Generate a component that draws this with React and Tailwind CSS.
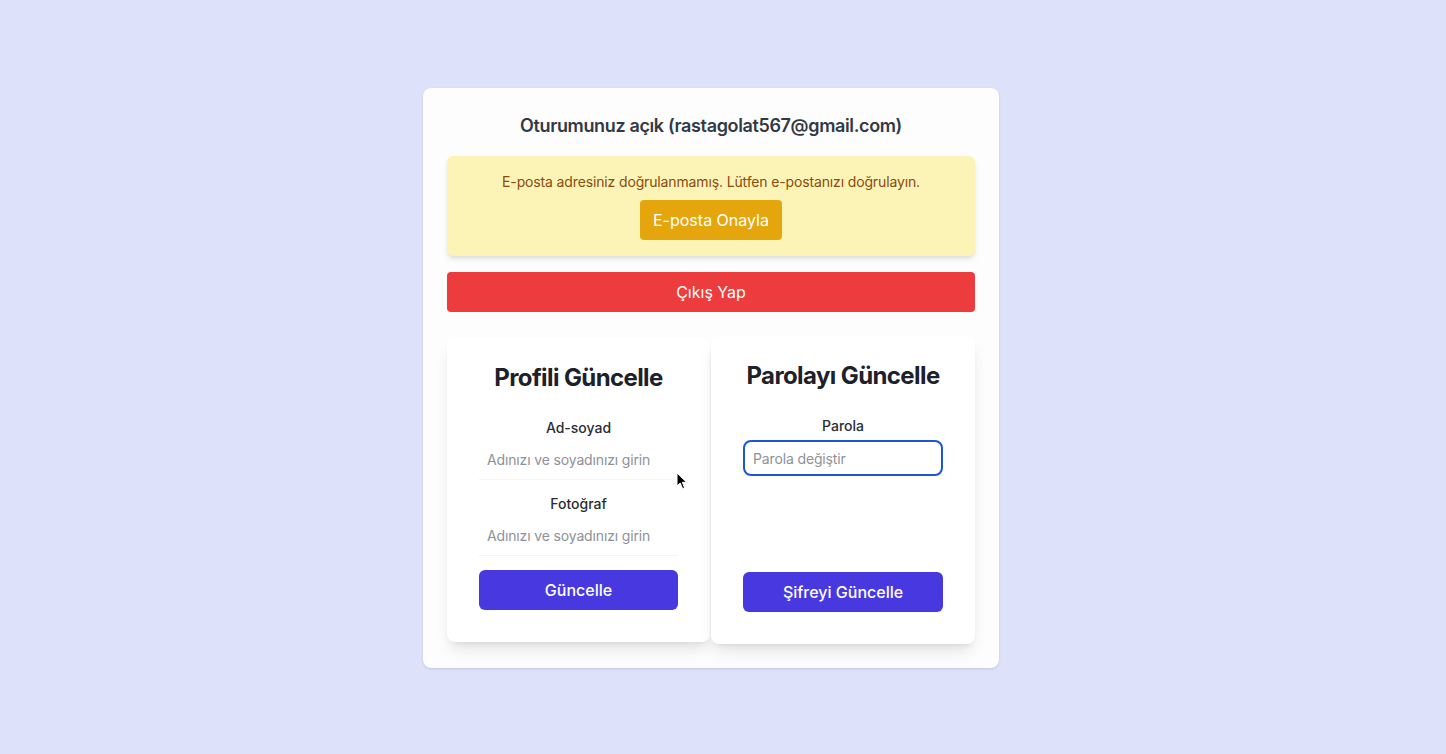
import React from 'react';

const font = { fontFamily: 'Inter, "Noto Sans", sans-serif' };

const Cursor = () => (
  <svg className="absolute left-[676px] top-[472px]" width="12" height="18" viewBox="0 0 12 18">
    <path d="M1 1 L1 14 L4.2 11 L6.6 16.6 L8.6 15.8 L6.3 10.3 L10.6 10.3 Z" fill="#000" stroke="#fff" strokeWidth="1" />
  </svg>
);

const App = () => {
  return (
    <div className="relative min-h-screen w-full bg-[#dde1fa] flex items-center justify-center pr-6 pt-0.5" style={font}>
      <div className="w-[576px] bg-[#fdfdfe] rounded-lg p-6 shadow-sm">
        {/* Session header */}
        <h2 className="text-lg leading-7 font-semibold tracking-[-0.02em] text-[#333944] text-center mb-4 whitespace-nowrap">
          Oturumunuz açık (rastagolat567@gmail.com)
        </h2>

        {/* Verify notice */}
        <div className="bg-[#fcf4b6] rounded-md shadow-md p-4 flex flex-col items-center">
          <p className="text-sm leading-5 tracking-[-0.01em] text-[#8a4b0f]">
            E-posta adresiniz doğrulanmamış. Lütfen e-postanızı doğrulayın.
          </p>
          <button className="mt-2 h-10 w-[142px] bg-[#e5a50c] text-white text-base rounded">
            E-posta Onayla
          </button>
        </div>

        <button className="mt-4 w-full h-10 bg-[#ec3c3e] text-white text-base rounded">
          Çıkış Yap
        </button>

        {/* Forms */}
        <div className="mt-6 flex items-start gap-px">
          <div className="mt-0.5 w-[263px] bg-white rounded-lg shadow-lg px-8 pt-6 pb-8 flex flex-col items-center">
            <h3 className="text-2xl leading-8 font-bold tracking-tight text-[#1d2129] mb-6 whitespace-nowrap">Profili Güncelle</h3>
            <label className="text-sm leading-5 font-medium text-[#2a2d33]">Ad-soyad</label>
            <input
              className="mt-0.5 w-full h-10 px-2 text-sm tracking-[-0.01em] border-b border-gray-100 outline-none bg-transparent placeholder:text-[#8e9199]"
              placeholder="Adınızı ve soyadınızı girin"
            />
            <label className="mt-[14px] text-sm leading-5 font-medium text-[#2a2d33]">Fotoğraf</label>
            <input
              className="mt-0.5 w-full h-10 px-2 text-sm tracking-[-0.01em] border-b border-gray-100 outline-none bg-transparent placeholder:text-[#8e9199]"
              placeholder="Adınızı ve soyadınızı girin"
            />
            <button className="mt-[14px] w-full h-10 bg-[#4838df] text-white text-base font-medium rounded-md">
              Güncelle
            </button>
          </div>

          <div className="w-[264px] h-[308px] bg-white rounded-lg shadow-lg px-8 pt-6 pb-8 flex flex-col items-center">
            <h3 className="text-2xl leading-8 font-bold tracking-tight text-[#1d2129] mb-6 whitespace-nowrap">Parolayı Güncelle</h3>
            <label className="text-sm leading-5 font-medium text-[#2a2d33]">Parola</label>
            <input
              className="mt-1 w-full h-9 px-2 text-sm tracking-[-0.01em] border-2 border-[#1d56d2] rounded-lg outline-none bg-white placeholder:text-[#8e9199]"
              placeholder="Parola değiştir"
            />
            <button className="mt-auto w-full h-10 bg-[#4838df] text-white text-base font-medium rounded-md">
              Şifreyi Güncelle
            </button>
          </div>
        </div>
      </div>
      <Cursor />
    </div>
  );
};

export default App;
